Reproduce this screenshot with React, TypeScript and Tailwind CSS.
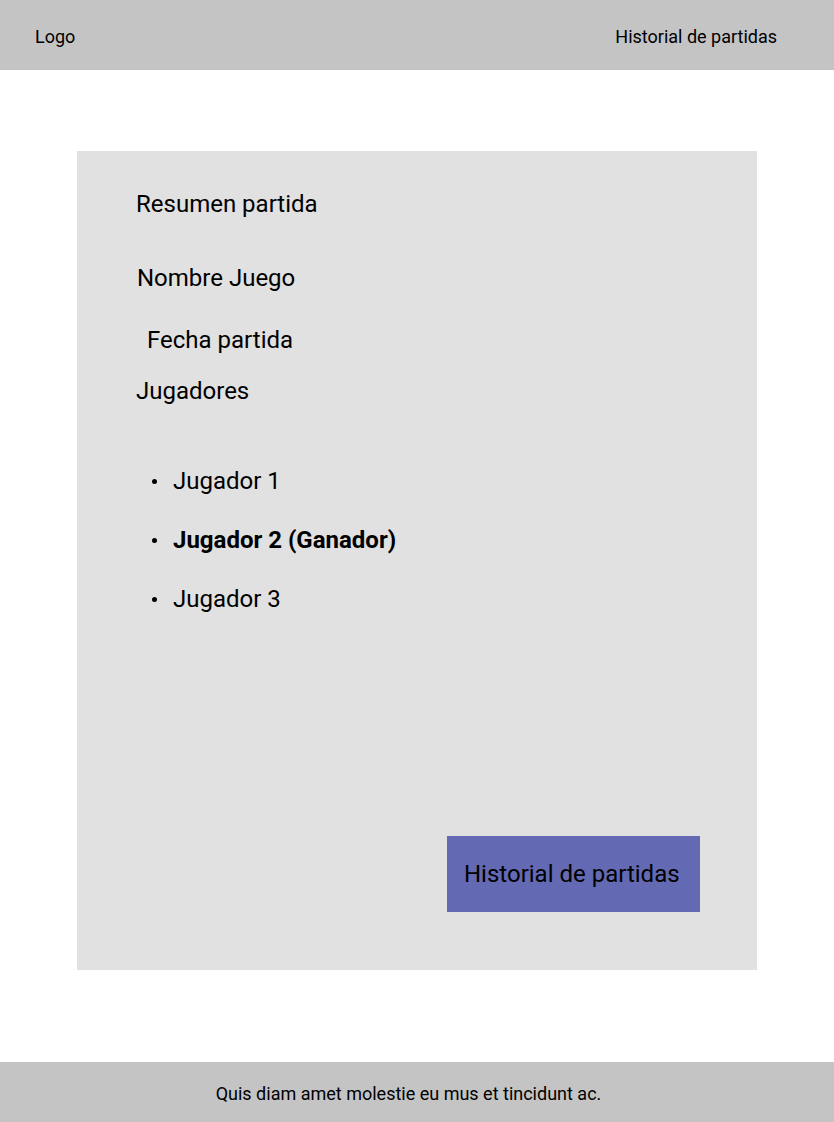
import React from 'react';

const players = [
  { name: 'Jugador 1', winner: false },
  { name: 'Jugador 2 (Ganador)', winner: true },
  { name: 'Jugador 3', winner: false },
];

const App: React.FC = () => {
  return (
    <div className="min-h-[1122px] flex flex-col bg-white text-black font-['Roboto',sans-serif]">
      <header className="h-[70px] bg-[#c4c4c4] flex items-center justify-between pl-[35px] pr-[57px] pt-[2px] text-[18px]">
        <span>Logo</span>
        <span>Historial de partidas</span>
      </header>

      <main className="flex-1 flex justify-center pt-[81px]">
        <section className="w-[680px] h-[819px] bg-[#e1e1e1] flex flex-col pt-[39px] pl-[59px] pr-[57px] pb-[58px] text-[24px] leading-[28px]">
          <h1>Resumen partida</h1>
          <p className="mt-[46px] ml-[1px]">Nombre Juego</p>
          <p className="mt-[34px] ml-[11px]">Fecha partida</p>
          <p className="mt-[23px]">Jugadores</p>

          <ul className="mt-[62px] flex flex-col gap-[31px]">
            {players.map((p) => (
              <li key={p.name} className="flex items-center">
                <span className="ml-[16px] w-[5px] h-[5px] rounded-full bg-black" />
                <span className={`ml-[16px] ${p.winner ? 'font-bold' : ''}`}>{p.name}</span>
              </li>
            ))}
          </ul>

          <button className="mt-auto self-end w-[253px] h-[76px] bg-[#636ab3] text-left pl-[17px] text-[24px]">
            Historial de partidas
          </button>
        </section>
      </main>

      <footer className="mt-[92px] h-[60px] bg-[#c4c4c4] flex items-center justify-center pt-[2px] pr-[17px] text-[18px]">
        Quis diam amet molestie eu mus et tincidunt ac.
      </footer>
    </div>
  );
};

export default App;
